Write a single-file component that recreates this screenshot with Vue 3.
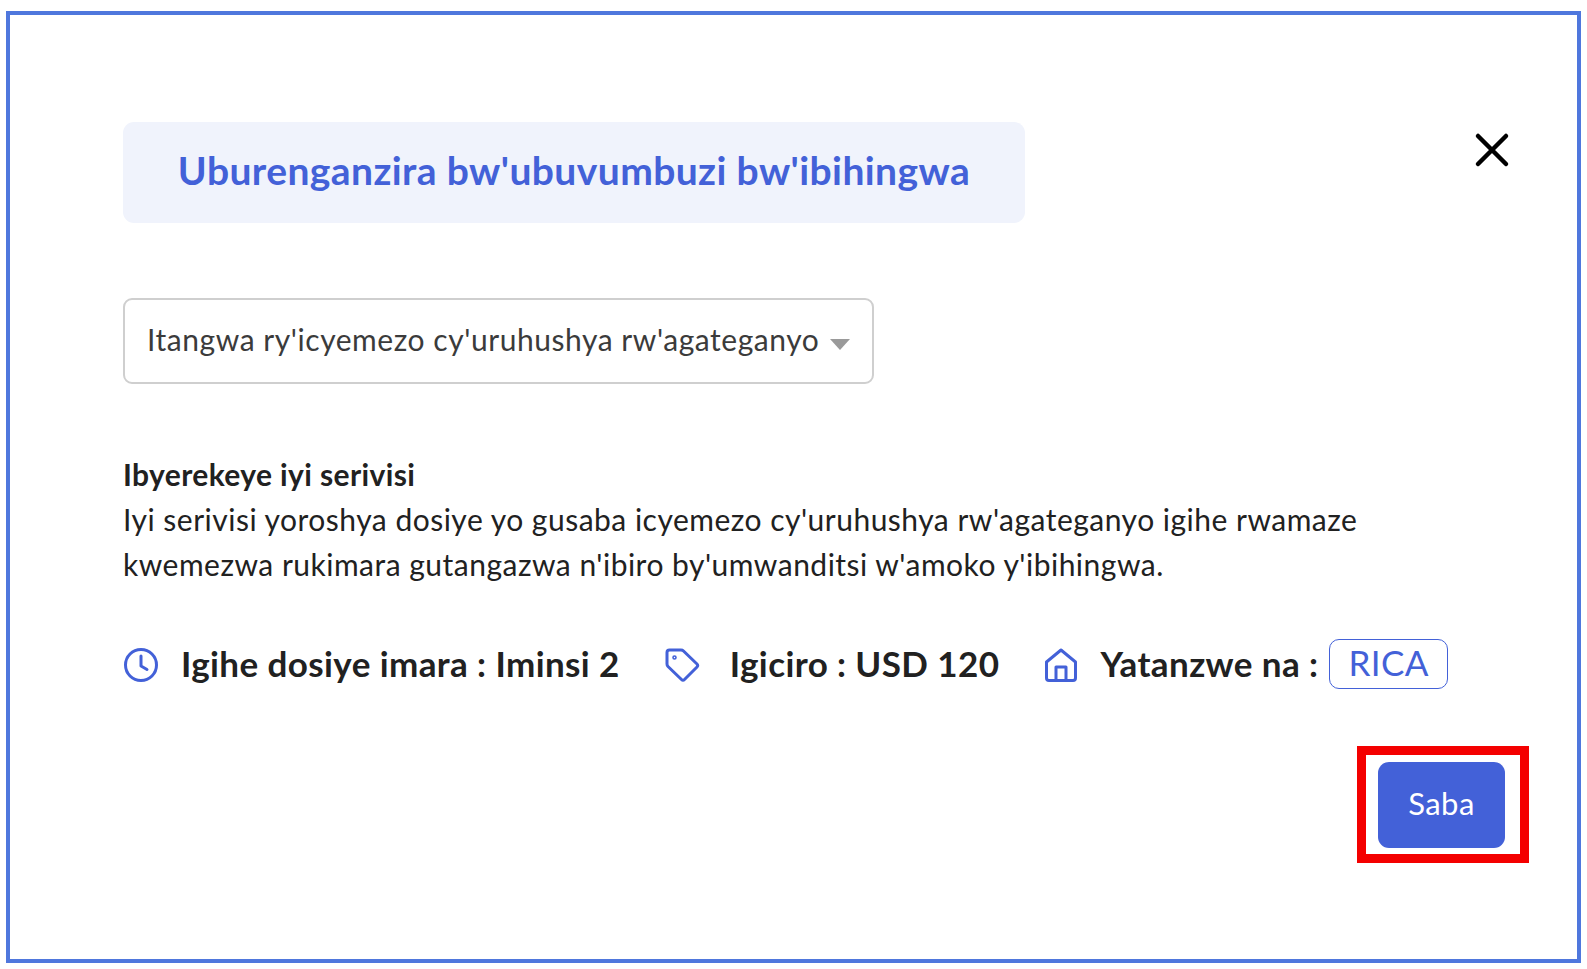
<template>
  <div class="frame">
    <div class="top-row">
      <h1 class="title">Uburenganzira bw'ubuvumbuzi bw'ibihingwa</h1>
      <svg class="close" width="38" height="38" viewBox="0 0 38 38">
        <path d="M5 5 L33 33 M33 5 L5 33" fill="none" stroke="#000" stroke-width="4.5" stroke-linecap="round" />
      </svg>
    </div>

    <div class="select">
      <span>Itangwa ry'icyemezo cy'uruhushya rw'agateganyo</span>
      <i class="caret"></i>
    </div>

    <div class="about">
      <div class="about-title">Ibyerekeye iyi serivisi</div>
      <p>Iyi serivisi yoroshya dosiye yo gusaba icyemezo cy'uruhushya rw'agateganyo igihe rwamaze kwemezwa rukimara gutangazwa n'ibiro by'umwanditsi w'amoko y'ibihingwa.</p>
    </div>

    <div class="meta">
      <div class="meta-item item-time">
        <svg width="36" height="36" viewBox="0 0 36 36" fill="none" stroke="#4361d8" stroke-width="3" stroke-linecap="round" stroke-linejoin="round">
          <circle cx="18" cy="18" r="15.5" />
          <path d="M18 9 V19 L24 22.5" />
        </svg>
        <span>Igihe dosiye imara : Iminsi 2</span>
      </div>
      <div class="meta-item item-price">
        <svg width="36" height="36" viewBox="0 0 36 36" fill="none" stroke="#4361d8" stroke-width="3" stroke-linecap="round" stroke-linejoin="round">
          <path d="M3 5.5 Q3 3 5.5 3 H17 Q18.5 3 19.5 4 L33 17 Q34.5 18.5 33 20 L20.5 32.5 Q19 34 17.5 32.5 L4 19.5 Q3 18.5 3 17 Z" />
          <circle cx="10.5" cy="10.5" r="0.8" />
        </svg>
        <span>Igiciro : USD 120</span>
      </div>
      <div class="meta-item item-org">
        <svg width="36" height="36" viewBox="0 0 36 36" fill="none" stroke="#4361d8" stroke-width="3" stroke-linecap="round" stroke-linejoin="round">
          <path d="M3.5 15 L18 3 L32.5 15 V31 Q32.5 33.5 30 33.5 H6 Q3.5 33.5 3.5 31 Z" />
          <path d="M13 33.5 V20 H23 V33.5" />
        </svg>
        <span>Yatanzwe na :</span>
        <span class="badge">RICA</span>
      </div>
    </div>

    <div class="footer">
      <div class="highlight">
        <button class="send">Saba</button>
      </div>
    </div>
  </div>
</template>

<script setup>
</script>

<style scoped>
.frame {
  box-sizing: border-box;
  width: 1575px;
  height: 952px;
  margin: 11px 6px 0;
  border: 4px solid #4f77dd;
  padding: 107px 48px 0 113px;
  background: #fff;
  font-family: "Lato", "Noto Sans", sans-serif;
  color: #212121;
}
.top-row {
  display: flex;
  justify-content: space-between;
  align-items: flex-start;
}
.title {
  box-sizing: border-box;
  width: 902px;
  height: 101px;
  margin: 0;
  background: #f0f3fc;
  border-radius: 11px;
  color: #4361d8;
  font-size: 39px;
  font-weight: 700;
  letter-spacing: 0.4px;
  line-height: 97px;
  text-align: center;
}
.close {
  margin: 9px 18px 0 0;
}
.select {
  box-sizing: border-box;
  display: flex;
  align-items: center;
  justify-content: space-between;
  width: 751px;
  height: 86px;
  padding: 0 22px 4px 22px;
  margin-top: 75px;
  border: 2px solid #cfcfcf;
  border-radius: 9px;
  font-size: 30px;
  letter-spacing: 0.55px;
  color: #3b3b3b;
}
.caret {
  width: 0;
  height: 0;
  margin-top: 11px;
  border-left: 10px solid transparent;
  border-right: 10px solid transparent;
  border-top: 11px solid #9a9a9a;
}
.about {
  margin-top: 68px;
  font-size: 30px;
  line-height: 45px;
}
.about-title {
  font-weight: 700;
  letter-spacing: 0.38px;
}
.about p {
  margin: 0;
  width: 1270px;
  letter-spacing: 0.49px;
}
.meta {
  display: flex;
  align-items: center;
  height: 50px;
  margin-top: 52px;
  font-size: 35px;
  font-weight: 700;
  letter-spacing: 0.4px;
}
.meta-item {
  display: flex;
  align-items: center;
}
.meta-item svg {
  flex: none;
  margin-top: 2px;
}
.meta-item > span:not(.badge) {
  margin-top: -3px;
}
.item-time svg {
  margin-right: 22px;
}
.item-price {
  margin-left: 44px;
}
.item-price svg {
  margin-right: 30px;
}
.item-org {
  margin-left: 44px;
}
.item-org svg {
  margin-right: 21px;
}
.badge {
  box-sizing: border-box;
  height: 50px;
  margin-left: 11px;
  padding: 0 18px;
  border: 1.5px solid #4361d8;
  border-radius: 10px;
  color: #4361d8;
  font-weight: 400;
  line-height: 44px;
}
.footer {
  display: flex;
  justify-content: flex-end;
  margin-top: 57px;
}
.highlight {
  box-sizing: border-box;
  width: 172px;
  height: 117px;
  padding: 7px 0 0 12px;
  border: 9px solid #f40000;
}
.send {
  display: block;
  width: 127px;
  height: 86px;
  padding: 0 0 4px;
  border: none;
  border-radius: 11px;
  background: #4361d8;
  color: #fff;
  font-family: inherit;
  font-size: 31px;
  letter-spacing: 0.4px;
}
</style>

<style>
html,
body {
  margin: 0;
  background: #fff;
}
</style>
